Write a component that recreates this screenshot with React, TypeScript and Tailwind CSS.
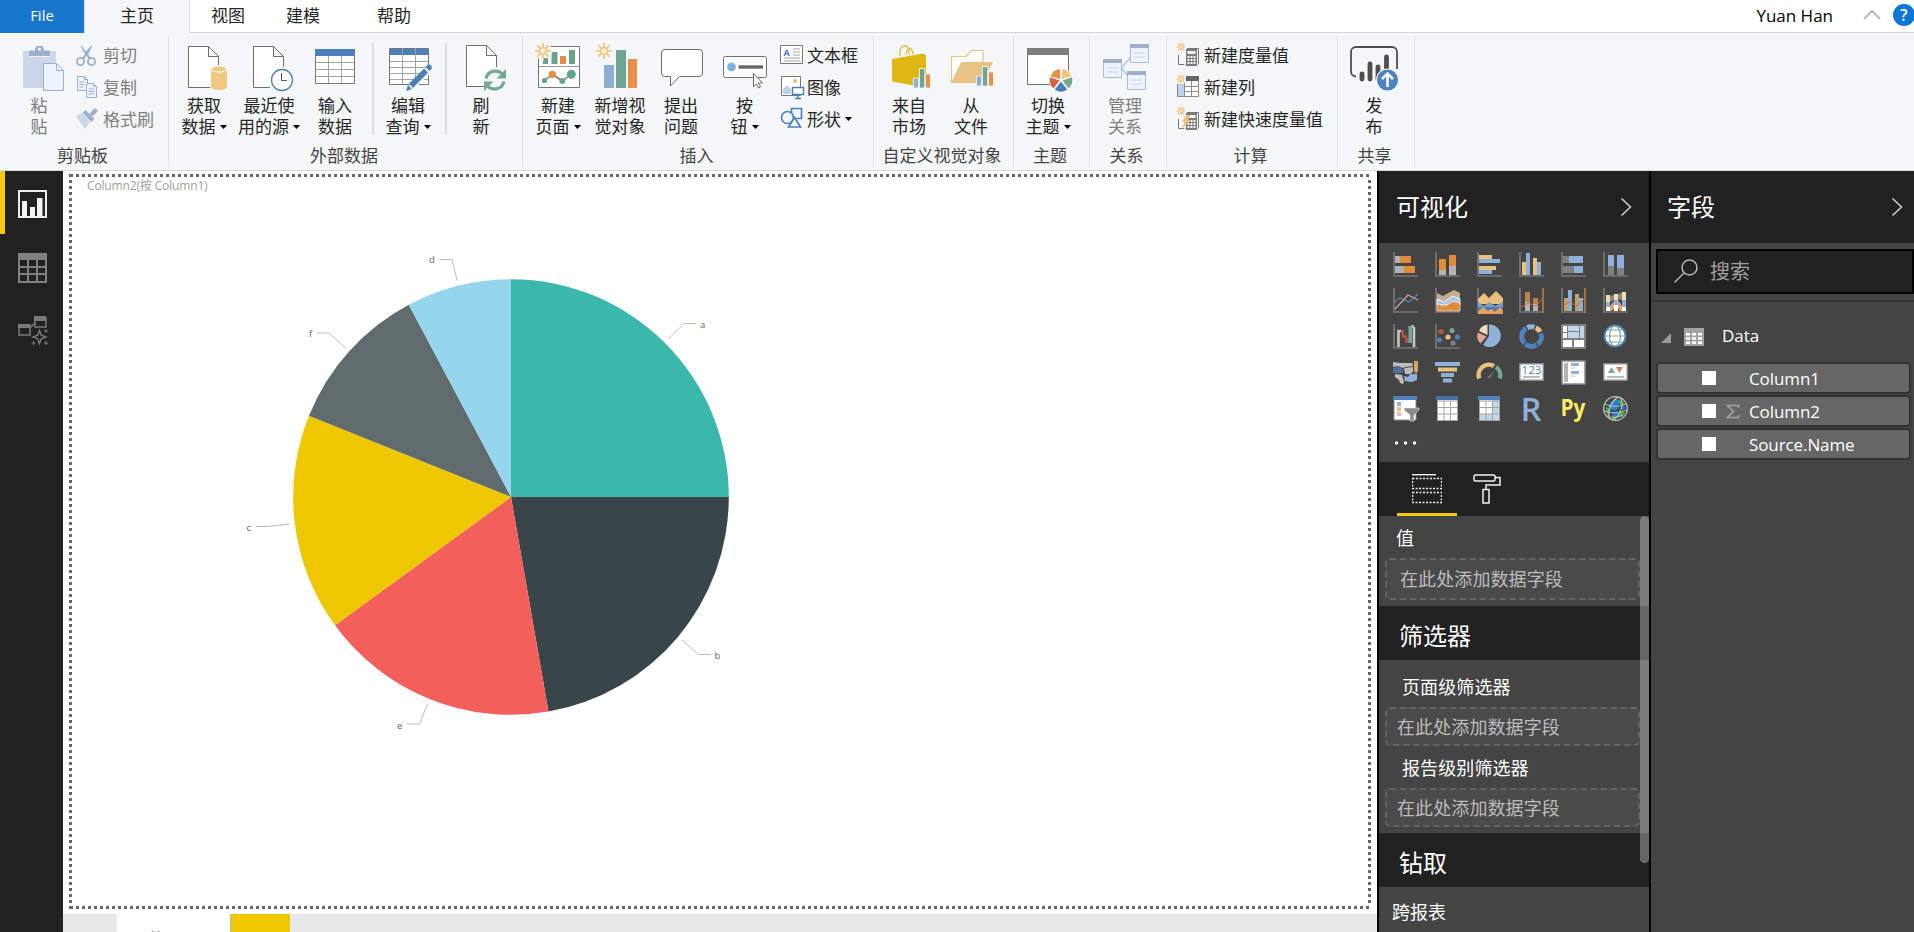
import type { ReactNode } from "react";

const FONT = "font-['Open_Sans','Noto_Sans_CJK_SC',sans-serif]";

/* ---------- shared drawing pieces ---------- */

function Art({ children }: { children: ReactNode }) {
  return (
    <svg className="block shrink-0 overflow-visible" width="48" height="50" viewBox="0 0 48 50" fill="none">
      {children}
    </svg>
  );
}

function SmallArt({ children }: { children: ReactNode }) {
  return (
    <svg className="block shrink-0 overflow-visible" width="24" height="24" viewBox="0 0 24 24" fill="none">
      {children}
    </svg>
  );
}

function Caret() {
  return (
    <svg className="ml-1 inline-block shrink-0" width="7" height="4" viewBox="0 0 7 4">
      <path d="M0 0h7L3.5 4z" fill="#000" />
    </svg>
  );
}

function Spark({ x, y, r, w = 1.6 }: { x: number; y: number; r: number; w?: number }) {
  const d = r * 0.72;
  const i = r * 0.42;
  const k = i * 0.8;
  return (
    <g stroke="#ecc27a" strokeWidth={w}>
      <path
        d={`M${x} ${y - r}V${y - i}M${x} ${y + i}V${y + r}M${x - r} ${y}H${x - i}M${x + i} ${y}H${x + r}M${x - d} ${y - d}L${x - k} ${y - k}M${x + k} ${y + k}L${x + d} ${y + d}M${x - d} ${y + d}L${x - k} ${y + k}M${x + k} ${y - k}L${x + d} ${y - d}`}
      />
      <circle cx={x} cy={y} r={i} strokeWidth={w * 0.8} fill="#f8ecd2" />
    </g>
  );
}

/* ---------- large ribbon icons ---------- */

const PasteIcon = () => (
  <Art>
    <path d="M8 8h33v37H8z" fill="#cdd7e9" />
    <path d="M14 7.500h6V5h1V3h7v2h1v2.500h6V13H14z" fill="#9fb0cd" />
    <circle cx="24.500" cy="6" r="1.500" fill="#f4f6f8" />
    <path d="M14 13.500h21" stroke="#f4f6f8" />
    <path d="M28.500 20.500h13l7 7v20h-20z" fill="#eef4fd" stroke="#9fb0cd" />
    <path d="M41.500 20.500v7h7" stroke="#9fb0cd" />
  </Art>
);

const GetDataIcon = () => (
  <Art>
    <path d="M8.500 3.500h20l10 10v31h-30z" fill="#fff" />
    <path d="M38.500 22v-8.500l-10-10h-20v41H30M28.500 3.500v10h10" stroke="#6e6e6e" />
    <path d="M31 26v18c0 4 16 4 16 0V26z" fill="#efc981" />
    <ellipse cx="39" cy="26" rx="8" ry="3" fill="#efc981" stroke="#fff" />
  </Art>
);

const RecentIcon = () => (
  <Art>
    <path d="M8.500 3.500h20l10 10v31h-30z" fill="#fff" />
    <path d="M38.500 24V13.500l-10-10h-20v41H25M28.500 3.500v10h10" stroke="#6e6e6e" />
    <circle cx="37" cy="37" r="10.500" fill="#fff" stroke="#4c82bd" strokeWidth="1.300" />
    <path d="M36.500 30v7.500H42" stroke="#555" />
  </Art>
);

const EnterDataIcon = () => (
  <Art>
    <path d="M4.500 7.500h39v33h-39z" fill="#fff" stroke="#777" />
    <path d="M4 6h40v7H4z" fill="#4c80ba" />
    <path d="M17.500 13v27M30.500 13v27M5 19.500h38M5 26.500h38M5 33.500h38" stroke="#a3a3a3" />
  </Art>
);

const EditQueryIcon = () => (
  <Art>
    <path d="M5.500 5.500h39v36h-39z" fill="#fff" stroke="#777" />
    <path d="M6 6h38v6H6z" fill="#4c80ba" />
    <path d="M18.500 5v36M31.500 5v36M6 18.500h38M6 24.500h38M6 30.500h38M6 36.500h38" stroke="#a3a3a3" />
    <path d="M25 42L44 23l5 5-19 18-8 3z" fill="#f4f6f8" />
    <path d="M22 48l2-6 4 4zM25 40.500L40 25.500l4 4-15 15.500zM41.500 24l2-2c2-1.500 5.500 1.500 4 4l-2 2z" fill="#4c80ba" />
  </Art>
);

const RefreshIcon = () => (
  <Art>
    <path d="M9.500 2.500h20l10 10v31h-30z" fill="#fff" />
    <path d="M39.500 24V12.500l-10-10h-20v41H27M29.500 2.500v10h10" stroke="#6e6e6e" />
    <circle cx="38" cy="37" r="11" fill="#f4f6f8" />
    <g stroke="#74a893" strokeWidth="3.200">
      <path d="M29 35.500c2-8.500 13-10 17.500-3M47 38.500c-2 8.500-13 10-17.500 3" />
    </g>
    <path d="M49 26v9.500h-9.500zM27 48v-9.500h9.500z" fill="#74a893" />
  </Art>
);

const NewPageIcon = () => (
  <Art>
    <path d="M4.500 3.500h41v41h-41z" fill="#fff" stroke="#777" />
    <path d="M5 23.500h40" stroke="#999" />
    <path d="M9 15h5v6H9zM17.500 9h6v12h-6zM35 7h6v14h-6z" fill="#68a38c" />
    <path d="M26 13h6v8h-6z" fill="#e78b45" />
    <circle cx="9" cy="8" r="9" fill="#f4f6f8" />
    <path d="M10 15h4v6h-4z" fill="#68a38c" />
    <Spark x={9} y={8} r={8} />
    <path d="M10.500 37.500l8-6 10 6.500 9-7" stroke="#777" strokeWidth="1.500" />
    <circle cx="10.500" cy="37.500" r="2.600" fill="#68a38c" />
    <circle cx="18.300" cy="31.300" r="3.600" fill="#e78b45" />
    <circle cx="28.300" cy="38" r="3" fill="#68a38c" />
    <circle cx="37.300" cy="31.300" r="4.500" fill="#68a38c" />
  </Art>
);

const NewVisualIcon = () => (
  <Art>
    <Spark x={8} y={8} r={8} />
    <path d="M8 22h10v23H8z" fill="#8dafd5" />
    <path d="M20 7h10v38H20z" fill="#6fa592" />
    <path d="M32 16h9v29h-9z" fill="#e78f4b" />
  </Art>
);

const AskIcon = () => (
  <Art>
    <path
      d="M8 6.500h34a3.500 3.500 0 013.500 3.500v20a3.500 3.500 0 01-3.500 3.500H22.500L13.500 43v-9.500H8A3.500 3.500 0 014.500 30V10A3.500 3.500 0 018 6.500z"
      fill="#fff"
      stroke="#6e6e6e"
    />
  </Art>
);

const ButtonIcon = () => (
  <Art>
    <rect x="2.500" y="13.500" width="43" height="21" rx="2" fill="#fff" stroke="#6e6e6e" />
    <circle cx="10.500" cy="24" r="4.400" fill="#7fb0d8" />
    <path d="M17.500 24H42" stroke="#666" strokeWidth="3.400" />
    <path d="M32.500 30.500v13l3-2.500 2 4 2-1-2-4h4z" fill="#fff" stroke="#666" />
  </Art>
);

const MiniBars = ({ x, y }: { x: number; y: number }) => (
  <g stroke="#f8f9fa" strokeWidth="0.800">
    <path d={`M${x} ${y - 10}h5v10h-5z`} fill="#8dafd5" />
    <path d={`M${x + 6} ${y - 19.5}h5.200V${y}h-5.200z`} fill="#6fa592" />
    <path d={`M${x + 12} ${y - 14}h5v14h-5z`} fill="#e78f4b" />
  </g>
);

const MarketIcon = () => (
  <Art>
    <path d="M15 13c-1-6 1-10 5-10.500 3 0 4 3 4 9M21 12c0-4 2-7 4-6.500 3 1 3 4 3 6" stroke="#dfc04b" strokeWidth="1.400" />
    <path d="M7 16l31-5.500 3 1.500v30.500H29l-22-4z" fill="#ddb714" />
    <MiniBars x={28.5} y={45} />
  </Art>
);

const FileVisualIcon = () => (
  <Art>
    <path d="M4.500 40V13.500h14l6-6h11.500V20" fill="#fff" stroke="#e9c383" strokeWidth="1.200" />
    <path d="M14 19h32L36 40H4z" fill="#e9c383" />
    <MiniBars x={29.5} y={43} />
  </Art>
);

const ThemeIcon = () => (
  <Art>
    <path d="M3.500 5.500h41v36h-41z" fill="#fff" stroke="#6e6e6e" />
    <path d="M3 5h42v7H3z" fill="#7d7d7d" />
    <circle cx="37" cy="37" r="12" fill="#fff" />
    <path d="M36.500 36L36 26a11 11 0 00-9.500 7.500z" fill="#e78f4b" />
    <path d="M38 36V26a11 11 0 019.500 7.500z" fill="#ecc880" />
    <path d="M38.500 37.500l9.500-3.200a11 11 0 01-3.500 11.200z" fill="#79a995" />
    <path d="M37 38.500l6.300 8a11 11 0 01-12.600 0z" fill="#4c80ba" />
    <path d="M35.500 37.500L26 34.300a11 11 0 003.500 11.200z" fill="#da6241" />
  </Art>
);

const RelBox = ({ x, y }: { x: number; y: number }) => (
  <g>
    <path d={`M${x + 0.5} ${y + 0.5}h18v18h-18z`} fill="#eef4fd" stroke="#aebdd6" />
    <path d={`M${x} ${y}h19v4H${x}z`} fill="#9fb0cd" />
    <path d={`M${x + 4} ${y + 9}h11M${x + 4} ${y + 13}h11`} stroke="#c5d2e6" />
  </g>
);

const RelationIcon = () => (
  <Art>
    <path d="M20 25l10-11M20 24l8 11" stroke="#b8c6dd" strokeWidth="1.600" />
    <RelBox x={29} y={1} />
    <RelBox x={2} y={16} />
    <RelBox x={26} y={28} />
  </Art>
);

const PublishIcon = () => (
  <Art>
    <path
      d="M6 33.500a5 5 0 01-5-5V9a5 5 0 015-5h36a5 5 0 015 5v17"
      stroke="#4f4f4f"
      strokeWidth="1.800"
      fill="none"
    />
    <g stroke="#4f4f4f" strokeWidth="4.800" strokeLinecap="round">
      <path d="M12 31v5M20 21v15M28 24v12M36.500 14v14" />
    </g>
    <circle cx="37.500" cy="37" r="11.500" fill="#f4f6f8" />
    <circle cx="37.500" cy="37" r="10.500" fill="#4c82bd" />
    <path d="M37.500 44V31M32 36l5.500-5.500L43 36" stroke="#fff" strokeWidth="2.600" />
  </Art>
);

/* ---------- small ribbon icons ---------- */

const CutIcon = () => (
  <SmallArt>
    <g stroke="#9fb0cd" strokeWidth="1.800">
      <circle cx="4.500" cy="18.500" r="3.600" />
      <circle cx="15.500" cy="18.500" r="3.600" />
    </g>
    <path d="M4.500 1.500c1 4 3 7 4.500 9.500L6 15.500l2 1 2.500-4 2.500 4 2-1-3-4.500c2-2.500 3.500-5.500 4-9.500l-6 7z" fill="#9fb0cd" />
  </SmallArt>
);

const CopyIcon = () => (
  <SmallArt>
    <g fill="#eef4fd" stroke="#9fb0cd">
      <path d="M1.500 1.500h7l3 3v11h-10z" />
      <path d="M10.500 8.500h7l3 3v11h-10z" />
    </g>
    <path
      d="M8.500 1.500v3h3M17.500 8.500v3h3M3.500 7h5M3.500 9.500h5M3.500 12h4M12.500 14h6M12.500 16.500h6M12.500 19h6"
      stroke="#9fb0cd"
    />
  </SmallArt>
);

const BrushIcon = () => (
  <SmallArt>
    <path d="M0 9l6-3 8 9-5 7z" fill="#cdd7e9" />
    <path d="M6.500 6l3-3 9 9-3 3z" fill="#9fb0cd" />
    <path d="M13.500 7l4-5c2-1.500 4.500.500 4 2.500l-5 5z" fill="#9fb0cd" />
  </SmallArt>
);

const TextBoxIcon = () => (
  <SmallArt>
    <path d="M.5 2.500h22v18H.5z" fill="#fff" stroke="#777" />
    <path d="M13 6h7M13 9h7M13 12h7M4 15h16M4 18h16" stroke="#a3a3a3" />
    <text x="3.500" y="12.500" fontSize="9" fontWeight="700" fill="#3f76b5" className={FONT}>
      A
    </text>
  </SmallArt>
);

const ImageIcon = () => (
  <SmallArt>
    <path d="M1.500 1.500h19v19h-19z" fill="#fff" stroke="#777" />
    <path d="M3 19V14l4-4 4 4v5z" fill="#c2d2e6" />
    <circle cx="15" cy="6" r="2" fill="#eab766" />
    <path d="M12.500 12.500h11v7h-11z" fill="#fff" stroke="#4c80ba" strokeWidth="1.400" />
    <path d="M18 20v3M15 23.500h6" stroke="#4c80ba" strokeWidth="1.400" />
  </SmallArt>
);

const ShapeIcon = () => (
  <SmallArt>
    <g stroke="#4c82bd" strokeWidth="1.700">
      <path d="M11.500 1.500h10v10h-10z" fill="#f4f6f8" />
      <circle cx="7.500" cy="10.500" r="6" fill="#f4f6f8" />
      <path d="M14.500 10.500l6 9.500h-12z" fill="#f4f6f8" />
    </g>
  </SmallArt>
);

const Calc = () => (
  <g>
    <path d="M9 6h11v17H9z" fill="#7c7c7c" />
    <path d="M10.500 8h8v3h-8z" fill="#f4f6f8" />
    <path d="M10.500 14h8M10.500 17h8M10.500 20h8" stroke="#f4f6f8" strokeWidth="1.800" strokeDasharray="2 1" />
  </g>
);

const MeasureIcon = () => (
  <SmallArt>
    <path d="M1.500 12v9.500h6M10 5.500h11.500v16" stroke="#777" fill="none" />
    <Calc />
    <Spark x={4} y={4} r={4.5} w={1.2} />
  </SmallArt>
);

const ColumnIcon = () => (
  <SmallArt>
    <path d="M.5 8.500h21v13H.5z" fill="#fff" />
    <path d="M0 9h7v13H0z" fill="#bcd2e9" />
    <path d="M9 1h13v5H9z" fill="#666" />
    <path d="M.5 9v12.500h21V5M7.500 8v13M14.500 6v15M8 11.500h13M8 16.500h13" stroke="#8a8a8a" />
    <Spark x={4} y={4} r={4.5} w={1.2} />
  </SmallArt>
);

const QuickMeasureIcon = () => (
  <SmallArt>
    <path d="M1.500 12v9.500h6M10 5.500h11.500v16" stroke="#777" fill="none" />
    <Calc />
    <path d="M9 8h5l-3 5h2.500L5 22l2.500-7H5z" fill="#ecc27a" />
    <Spark x={4} y={4} r={4.5} w={1.2} />
  </SmallArt>
);

/* ---------- ribbon layout ---------- */

type BigProps = { icon: ReactNode; lines: [string, string]; caret?: boolean; width: string; muted?: boolean };

function BigButton({ icon, lines, caret, width, muted }: BigProps) {
  return (
    <div className={`flex shrink-0 flex-col items-center ${width} ${muted ? "text-[#7f7f7f]" : "text-[#262626]"}`}>
      {icon}
      <div className="mt-[2px] h-[21px] whitespace-nowrap">{lines[0]}</div>
      <div className="flex h-[21px] items-center whitespace-nowrap">
        {lines[1]}
        {caret && <Caret />}
      </div>
    </div>
  );
}

function SmallButton({ icon, label, caret, muted }: { icon: ReactNode; label: string; caret?: boolean; muted?: boolean }) {
  return (
    <div className={`flex h-8 items-center ${muted ? "text-[#7f7f7f]" : "text-[#262626]"}`}>
      {icon}
      <span className="ml-[3px] whitespace-nowrap">{label}</span>
      {caret && <Caret />}
    </div>
  );
}

function Group({ label, width, pad, children }: { label: string; width: string; pad: string; children: ReactNode }) {
  return (
    <div className={`my-[3px] flex shrink-0 flex-col border-r border-[#dfe2e4] ${width}`}>
      <div className={`flex h-[109px] pt-[7px] ${pad}`}>{children}</div>
      <div className="h-[21px] pr-[3px] text-center whitespace-nowrap text-[#444]">{label}</div>
    </div>
  );
}

const Divider = ({ className }: { className: string }) => (
  <div className={`h-[91px] w-[2px] shrink-0 bg-[#dcdfe1] ${className}`} />
);

function Ribbon() {
  return (
    <div className="flex h-[138px] shrink-0 border-b border-[#d9dcdd] bg-[#f4f6f8] text-[17px] leading-[21px]">
      <Group label="剪贴板" width="w-[169px]" pad="pl-[9px]">
        <BigButton muted width="w-[60px]" icon={<PasteIcon />} lines={["粘", "贴"]} />
        <div className="-mt-[4px] ml-[7px] flex flex-col">
          <SmallButton muted icon={<CutIcon />} label="剪切" />
          <SmallButton muted icon={<CopyIcon />} label="复制" />
          <SmallButton muted icon={<BrushIcon />} label="格式刷" />
        </div>
      </Group>
      <Group label="外部数据" width="w-[354px]" pad="pl-[7px]">
        <BigButton caret width="w-[56px]" icon={<GetDataIcon />} lines={["获取", "数据"]} />
        <BigButton caret width="w-[74px]" icon={<RecentIcon />} lines={["最近使", "用的源"]} />
        <BigButton width="w-[58px]" icon={<EnterDataIcon />} lines={["输入", "数据"]} />
        <Divider className="ml-2" />
        <BigButton caret width="w-[68px]" icon={<EditQueryIcon />} lines={["编辑", "查询"]} />
        <Divider className="ml-[3px]" />
        <BigButton width="w-[68px]" icon={<RefreshIcon />} lines={["刷", "新"]} />
      </Group>
      <Group label="插入" width="w-[351px]" pad="pl-1">
        <BigButton caret width="w-[62px]" icon={<NewPageIcon />} lines={["新建", "页面"]} />
        <BigButton width="w-[62px]" icon={<NewVisualIcon />} lines={["新增视", "觉对象"]} />
        <BigButton width="w-[60px]" icon={<AskIcon />} lines={["提出", "问题"]} />
        <BigButton caret width="w-[67px]" icon={<ButtonIcon />} lines={["按", "钮"]} />
        <div className="-mt-[4px] ml-[2px] flex flex-col">
          <SmallButton icon={<TextBoxIcon />} label="文本框" />
          <SmallButton icon={<ImageIcon />} label="图像" />
          <SmallButton caret icon={<ShapeIcon />} label="形状" />
        </div>
      </Group>
      <Group label="自定义视觉对象" width="w-[140px]" pad="pl-1">
        <BigButton width="w-[62px]" icon={<MarketIcon />} lines={["来自", "市场"]} />
        <BigButton width="w-[62px]" icon={<FileVisualIcon />} lines={["从", "文件"]} />
      </Group>
      <Group label="主题" width="w-[76px]" pad="pl-px">
        <BigButton caret width="w-[66px]" icon={<ThemeIcon />} lines={["切换", "主题"]} />
      </Group>
      <Group label="关系" width="w-[77px]" pad="pl-[2px]">
        <BigButton muted width="w-[66px]" icon={<RelationIcon />} lines={["管理", "关系"]} />
      </Group>
      <Group label="计算" width="w-[171px]" pad="pl-[10px]">
        <div className="-mt-[4px] flex flex-col">
          <SmallButton icon={<MeasureIcon />} label="新建度量值" />
          <SmallButton icon={<ColumnIcon />} label="新建列" />
          <SmallButton icon={<QuickMeasureIcon />} label="新建快速度量值" />
        </div>
      </Group>
      <Group label="共享" width="w-[77px]" pad="pl-[3px]">
        <BigButton width="w-[66px]" icon={<PublishIcon />} lines={["发", "布"]} />
      </Group>
    </div>
  );
}

function TabBar() {
  return (
    <div className="flex h-[33px] shrink-0 bg-white text-[17px] leading-[31px] text-[#262626]">
      <div className="w-[84px] bg-[#1877cc] text-center text-[15px] text-white">File</div>
      <div className="w-[106px] border-x border-[#d9dcdd] bg-[#f4f6f8] text-center">主页</div>
      <div className="flex flex-1 border-b border-[#d5d8db]">
        <span className="ml-[21px]">视图</span>
        <span className="ml-[41px]">建模</span>
        <span className="ml-[57px]">帮助</span>
        <span className="ml-auto text-[17px] text-black">Yuan Han</span>
        <svg className="mt-2 ml-[30px]" width="18" height="14" viewBox="0 0 18 14" fill="none">
          <path d="M1 11l8-8 8 8" stroke="#a8a8a8" strokeWidth="1.600" />
        </svg>
        <div className="mt-1 ml-3 w-[21px] overflow-hidden">
          <div className="h-[22px] w-[22px] rounded-full bg-[#0a76d8] text-center text-[16px] leading-[22px] font-semibold text-white">
            ?
          </div>
        </div>
      </div>
    </div>
  );
}

/* ---------- left rail ---------- */

function Rail() {
  return (
    <div className="flex w-[63px] shrink-0 flex-col bg-[#212121]">
      <div className="flex h-[63px] items-center border-l-[5px] border-[#f2c811] pl-[13px]">
        <svg width="29" height="28" viewBox="0 0 29 28" className="mt-[3px]">
          <path d="M1 1h27v26H1z" fill="none" stroke="#ededed" strokeWidth="2" />
          <path d="M4 11h5v16H4zM12 17h5v10h-5zM19 8h5.500v19H19z" fill="#f3f3f3" />
        </svg>
      </div>
      <div className="flex h-[63px] items-center pl-[18px]">
        <svg width="29" height="30" viewBox="0 0 29 30" className="mt-[4px]">
          <path d="M0 0h29v30H0z" fill="#808080" />
          <path
            d="M2 7h7v6H2zM11 7h7v6h-7zM20 7h7v6h-7zM2 15h7v5H2zM11 15h7v5h-7zM20 15h7v5h-7zM2 22h7v6H2zM11 22h7v6h-7zM20 22h7v6h-7z"
            fill="#212121"
          />
        </svg>
      </div>
      <div className="flex h-[63px] items-center pl-[18px]">
        <svg width="30" height="30" viewBox="0 0 30 30" className="mt-[5px]" fill="none">
          <path d="M1 9h11v10H1zM17 2h11v9H17z" stroke="#7a7a7a" strokeWidth="1.500" />
          <path d="M0 8h12v4H0zM16 0h12v5H16z" fill="#7a7a7a" />
          <path d="M12 12l5-5" stroke="#7a7a7a" strokeWidth="1.500" />
          <path d="M21.500 14.500l1.800 4.700 4.700 1.800-4.700 1.800-1.800 4.700-1.800-4.700L15 21l4.700-1.800z" stroke="#7a7a7a" strokeWidth="1.500" />
          <path d="M28 13v4M26 15h4M28 25v4M26 27h4M15.500 25v4M13.500 27h4" stroke="#7a7a7a" />
        </svg>
      </div>
    </div>
  );
}

/* ---------- report canvas ---------- */

const CX = 281;
const CY = 266;
const R = 217.8;

const slices = [
  { from: 0, to: 90, color: "#3cb7ab" },
  { from: 90, to: 170.1, color: "#384549" },
  { from: 170.1, to: 233.9, color: "#f3605b" },
  { from: 233.9, to: 291.9, color: "#eec700" },
  { from: 291.9, to: 332, color: "#5f6b6d" },
  { from: 332, to: 360, color: "#95d5ee" },
];

function arc(from: number, to: number) {
  const pt = (deg: number) => {
    const a = (deg * Math.PI) / 180;
    return `${(CX + R * Math.sin(a)).toFixed(2)} ${(CY - R * Math.cos(a)).toFixed(2)}`;
  };
  return `M${CX} ${CY}L${pt(from)}A${R} ${R} 0 0 1 ${pt(to)}Z`;
}

const callouts = [
  { name: "a", x: 470, y: 97, line: "438.500,108 454,92.500 466,92.500" },
  { name: "b", x: 484.5, y: 428, line: "452,409 468.500,423.500 480.500,423.500" },
  { name: "e", x: 167, y: 497.5, line: "197.500,473 189.500,493 177,493" },
  { name: "c", x: 16.5, y: 300, line: "60,293 38,295.500 26,295.500" },
  { name: "f", x: 79, y: 106, line: "115.500,117 99,102 87,102" },
  { name: "d", x: 199, y: 32, line: "227,49.500 222,28.500 209.500,28.500" },
];

function PieChart() {
  return (
    <svg className="mt-[36px] ml-[158px] block" width="520" height="520" viewBox="0 0 520 520">
      {slices.map((s) => (
        <path key={s.color} d={arc(s.from, s.to)} fill={s.color} />
      ))}
      {callouts.map((c) => (
        <g key={c.name}>
          <polyline points={c.line} fill="none" stroke="#bdbdbd" />
          <text x={c.x} y={c.y} fontSize="9.500" fill="#666">
            {c.name}
          </text>
        </g>
      ))}
    </svg>
  );
}

const DOTS_H = "h-[3px] shrink-0 bg-[repeating-linear-gradient(90deg,#666_0_3px,transparent_3px_6px)]";
const DOTS_V = "w-[3px] shrink-0 bg-[repeating-linear-gradient(180deg,#666_0_3px,transparent_3px_6px)]";

function Canvas() {
  return (
    <div className="flex min-w-0 flex-1 flex-col bg-white">
      <div className="mt-[3px] mr-[6px] ml-[6px] flex h-[735px] shrink-0 flex-col">
        <div className="flex">
          <div className="h-[3px] w-1 bg-[#666]" />
          <div className={`ml-[3px] flex-1 ${DOTS_H}`} />
        </div>
        <div className="flex min-h-0 flex-1">
          <div className={`mt-[3px] ${DOTS_V}`} />
          <div className="flex flex-1 flex-col">
            <div className="ml-[15px] text-[12px] leading-[18px] tracking-[-0.15px] text-[#a0a0a0]">Column2(按 Column1)</div>
            <PieChart />
          </div>
          <div className={`mt-[3px] ${DOTS_V}`} />
        </div>
        <div className="flex">
          <div className="h-[3px] w-1 bg-[#666]" />
          <div className={`ml-[3px] flex-1 ${DOTS_H}`} />
        </div>
      </div>
      <div className="mt-[5px] flex h-[18px] shrink-0 overflow-hidden bg-[#e9e9e9]">
        <div className="ml-[54px] w-[113px] bg-white pt-4 text-center text-[16px] leading-[18px] text-[#333]">第 1 页</div>
        <div className="w-[60px] border-l border-[#bbb] bg-[#eec700]" />
      </div>
    </div>
  );
}

/* ---------- visualization gallery ---------- */

const G = "#777";
const OR = "#e08b3a";
const LG = "#b3b3b3";
const BL = "#8fb0d8";
const YL = "#e8c27d";
const DB = "#4f82bd";
const GN = "#74a893";

const Axis = () => <path d="M1 0v24h24" stroke={G} strokeWidth="1.700" fill="none" />;

const Ring = ({ at, len, color }: { at: number; len: number; color: string }) => (
  <circle
    cx="12.500"
    cy="12.500"
    r="9.800"
    fill="none"
    stroke={color}
    strokeWidth="5"
    pathLength="360"
    strokeDasharray={`${len} ${360 - len}`}
    transform={`rotate(${at - 90} 12.5 12.5)`}
  />
);

const visuals: ReactNode[] = [
  <>
    <Axis />
    <path d="M2 4h5v7H2zM2 14h9v7H2z" fill={LG} />
    <path d="M7 4h11v7H7zM11 14h11v7H11z" fill={OR} />
  </>,
  <>
    <Axis />
    <path d="M4 18h7v5H4zM14 14h7v9h-7z" fill={LG} />
    <path d="M4 7h7v11H4zM14 3h7v11h-7z" fill={OR} />
  </>,
  <>
    <Axis />
    <path d="M2 3h13v4H2zM2 14h17v4H2z" fill={YL} />
    <path d="M2 7h21v4H2zM2 18h13v4H2z" fill={BL} />
  </>,
  <>
    <Axis />
    <path d="M3 10h4v13H3zM14 6h4v17h-4z" fill={YL} />
    <path d="M7 1h4v22H7zM18 10h4v13h-4z" fill={BL} />
  </>,
  <>
    <Axis />
    <path d="M2 4h6v7H2zM2 14h11v7H2z" fill="#808080" />
    <path d="M8 4h14v7H8zM13 14h9v7h-9z" fill={BL} />
  </>,
  <>
    <Axis />
    <path d="M5 14h6v9H5zM14 16h7v7h-7z" fill="#808080" />
    <path d="M5 3h6v11H5zM14 3h7v13h-7z" fill={BL} />
  </>,
  <>
    <Axis />
    <path d="M2 14l5-4 9 4 9-8" stroke={DB} strokeWidth="1.200" fill="none" />
    <path d="M2 21L15 7l10 5" stroke="#d3a596" strokeWidth="1.200" fill="none" />
  </>,
  <>
    <Axis />
    <path d="M2 5l6 3 11-6 6 3v8H2z" fill="#bfae90" />
    <path d="M2 11l7 3 9-6 7 3v6H2z" fill="#a9c6e2" stroke="#fff" strokeWidth="0.900" />
    <path d="M2 15.500l7 3 9-5 7 1.500v8H2z" fill={OR} stroke="#fff" strokeWidth="0.600" />
  </>,
  <>
    <Axis />
    <path d="M1 11l6-6 5 5 7-7 7 7v6H1z" fill="#e8c27d" />
    <path d="M1 14l6 4 5-4 6 4 8-4v11H1z" fill="#7a9cc4" />
    <path d="M1 19h25v6H1z" fill="#4f7cab" />
    <path d="M1 24l5-5 5 4 3-2 4 3 5-5 3 4v3H1z" fill="#eba05f" />
  </>,
  <>
    <Axis />
    <path d="M6 14h5v9H6zM14 16h5v7h-5z" fill={LG} />
    <path d="M6 4h5v10H6zM14 10h5v6h-5z" fill="#b9824f" />
    <path d="M24 0v25" stroke="#b3763c" strokeWidth="1.800" />
    <path d="M2 19l7-4 8 3 6-7" stroke="#d8694a" fill="none" />
  </>,
  <>
    <Axis />
    <path d="M3 10h4v13H3zM14 6h4v17h-4z" fill="#c2a263" />
    <path d="M7 2h4v21H7zM18 10h4v13h-4z" fill={BL} />
    <path d="M24 0v25" stroke="#b3763c" strokeWidth="1.800" />
    <path d="M2 18l6-4 8 4 7-7" stroke="#d8694a" fill="none" />
  </>,
  <>
    <Axis />
    <path d="M7 8l4-1v5l-4 2zM15 6l4-1v7l-4-1z" fill="#8a8a80" />
    <path d="M7 18l4-5v8l-3 2H7zM15 12l4 6v5h-2l-2-3z" fill="#dba179" />
    <path d="M3 7h4v16H3zM11 6h4v17h-4zM19 4h4v19h-4z" fill="#fff" />
    <path d="M3 7h4v7H3zM11 6h4v7h-4zM19 4h4v8h-4z" fill="#efdcb1" />
    <path d="M3 14h4v5H3zM11 12h4v5h-4zM19 12h4v7h-4z" fill={BL} />
  </>,
  <>
    <Axis />
    <path d="M5.500 23V7H8M21 2.500h-3M21 3v20" stroke="#c5c5c5" strokeWidth="2.600" fill="none" />
    <path d="M8 6h3v5h3v7h-2v-4H9z" fill="#b3503a" />
    <path d="M12 14h4v5h-4z" fill="#b3503a" />
    <path d="M15.500 2h3.500v17h-3.500z" fill={GN} />
  </>,
  <>
    <Axis />
    <circle cx="6" cy="7.500" r="2.600" fill="#b9573f" />
    <circle cx="17" cy="6.500" r="2.600" fill={GN} />
    <circle cx="13" cy="13" r="2.600" fill={YL} />
    <circle cx="22.500" cy="13" r="2.600" fill={DB} />
    <circle cx="4.500" cy="16" r="2.600" fill={DB} />
    <circle cx="18" cy="19" r="2.600" fill="#808080" />
  </>,
  <>
    <path d="M12 12V0.500a11.300 11.300 0 11-6 20.500z" fill={BL} />
    <path d="M10.500 11V0.500A11 11 0 002 7z" fill="#ecdcb5" />
    <path d="M9.500 12.500L.8 8.500a11 11 0 002.700 11z" fill="#e3a79a" />
  </>,
  <>
    <Ring at={-26} len={44} color={BL} />
    <Ring at={26} len={36} color={YL} />
    <Ring at={72} len={70} color={DB} />
    <Ring at={149} len={70} color={DB} />
    <Ring at={226} len={100} color={DB} />
  </>,
  <>
    <path d="M0 0h25v25H0z" fill="#808080" />
    <path d="M2 2h4v6H2zM2 9h4v5H2zM2 16h9v7H2zM13 16h10v7H13z" fill="#fff" />
    <path d="M7 2h11v5H7zM7 8h11v6H7zM19 2h4v12h-4z" fill="#c5d6eb" />
  </>,
  <>
    <circle cx="12" cy="12" r="10.500" fill="#fff" stroke={DB} strokeWidth="1.800" />
    <g stroke="#79a995" fill="none" strokeWidth="1.200">
      <ellipse cx="12" cy="12" rx="5.500" ry="10" />
      <path d="M2 12h20M4 6h16M4 18h16" />
    </g>
  </>,
  <>
    <path d="M0 2l7 1h12V2l1 4-8 1-2 1-5-2-5 1zM11 8l9-1v5l-3 2h-5zM2 14l7 1 2 7-1 2-3-1-1-3-4-3z" fill="#bdbdbd" />
    <path d="M0 9l3-3 5 1 2 3v3H0z" fill="#4d6f9c" />
    <path d="M21 1h4v10l-2 3-2-3z" fill="#cfa65e" />
    <path d="M11 16l4 1 2-3h7v6l-5 2-7-1z" fill={BL} />
  </>,
  <>
    <path d="M0 2h25v4H0zM6 13h13v4H6zM8 18.500h9v4H8z" fill={BL} />
    <path d="M3 7.500h19v4H3z" fill={YL} />
  </>,
  <>
    <path d="M2.200 18.500A10.300 10.300 0 0117 6" stroke={YL} strokeWidth="4.400" fill="none" />
    <path d="M19 7a10.300 10.300 0 013.800 11.500" stroke={GN} strokeWidth="4.400" fill="none" />
    <path d="M10.500 17.500L18 10.500l-5 7.500-2 .5z" fill="#777" />
  </>,
  <>
    <path d="M.75 3.750h23.500v16.500H.75z" fill="#fff" stroke="#8a8a8a" strokeWidth="1.500" />
    <text x="2.500" y="13.500" fontSize="11" fill={DB} textLength="20" lengthAdjust="spacingAndGlyphs">
      123
    </text>
    <path d="M4 17h17" stroke="#777" />
  </>,
  <>
    <path d="M1 1h23v23H1z" fill="#fff" stroke="#8a8a8a" strokeWidth="1.500" />
    <path d="M3 3h4v19H3z" fill="#b3b3b3" />
    <path d="M10 3h8v3h-8zM10 11h8v3h-8z" fill={BL} />
    <path d="M10 8h4M10 16h4" stroke="#bbb" />
  </>,
  <>
    <path d="M.75 3.750h23.500v16.500H.75z" fill="#fff" stroke="#8a8a8a" strokeWidth="1.500" />
    <path d="M5 13l3.500-6 3.500 6z" fill={GN} />
    <path d="M13 7h7l-3.500 6z" fill="#e07a5c" />
    <path d="M4 17h17" stroke="#777" />
  </>,
  <>
    <path d="M1 1h22v23H1z" fill="#fff" stroke="#8a8a8a" />
    <path d="M0 0h24v4H0z" fill={DB} />
    <path d="M4 6h4v4H4z" fill={BL} />
    <path d="M4 11h4v4H4z" fill={YL} />
    <path d="M4 16h4v4H4z" fill="#ecbcb0" />
    <path d="M11 12h15v2l-5 5v6h-4v-6l-6-5z" fill="#8a8a8a" stroke="#fff" strokeWidth="0.500" />
  </>,
  <>
    <path d="M2 1h21v23.500H2z" fill="#fff" />
    <path d="M2 5h21M2.500 4v20.500h20V4M9 5v19M15.500 5v19M2 11.500h21M2 18h21" stroke="#a3a3a3" fill="none" />
    <path d="M1 0h22v4H1z" fill="#4a6fa5" />
  </>,
  <>
    <path d="M2 1h21v23.500H2z" fill="#fff" />
    <path d="M15.500 4H23v20.500H2V18h13.500z" fill="#c5d6eb" />
    <path d="M2 5h21M2.500 4v20.500h20V4M9 5v19M15.500 5v19M2 11.500h21M2 18h21" stroke="#a3a3a3" fill="none" />
    <path d="M1 0h22v4H1z" fill={DB} />
  </>,
  <text x="1.500" y="24.500" fontSize="32" fontWeight="600" fill={BL} textLength="21" lengthAdjust="spacingAndGlyphs">
    R
  </text>,
  <text x="-0.500" y="20" fontSize="23" fontWeight="700" fill="#fdec63" textLength="25" lengthAdjust="spacingAndGlyphs">
    Py
  </text>,
  <>
    <circle cx="12.500" cy="12.500" r="11.800" fill="#3d4a40" />
    <path d="M8 6l7-3 3 3-3 3 1 3-5 3-4-2-2-3zM9 17l5-2 5 2-3 5-6-1zM18 8l4 3-1 4-3-2z" fill="#2b7bd0" />
    <path d="M3 11l3 1 1 4-2 2-2-3zM16 3l5 4-2 3-3-3zM17 15l5 2-3 4-3-1zM9 20l4 1v3l-4-1z" fill="#4aae3f" />
    <g stroke="#c0c0c0" fill="none">
      <circle cx="12.500" cy="12.500" r="11.800" strokeWidth="1.300" />
      <ellipse cx="12.500" cy="12.500" rx="5.500" ry="11.800" transform="rotate(20 12.500 12.500)" />
      <path d="M2 8c7 3 14 3 21 0M1 15c8 3 16 2 23-1M5 21c5 1 11 0 15-2M15 1c-6 5-10 12-10 20" />
    </g>
  </>,
];

const Chevron = () => (
  <svg width="12" height="20" viewBox="0 0 12 20" fill="none">
    <path d="M1.500 1.500L10.500 10l-9 8.500" stroke="#d0d0d0" strokeWidth="1.500" />
  </svg>
);

function DropField({ size, pad }: { size: string; pad: string }) {
  return (
    <div
      className={`ml-[6px] flex w-[255px] items-center rounded-[5px] border-2 border-dashed border-[#636363] bg-[#4a4a4a] text-[18px] tracking-[0.1px] text-[#bcbcbc] ${size} ${pad}`}
    >
      在此处添加数据字段
    </div>
  );
}

const Section = ({ children }: { children: ReactNode }) => (
  <div className="flex h-[54px] items-center bg-[#212121] pl-5 text-[24px] leading-none text-white">
    <span className="mt-[6px]">{children}</span>
  </div>
);

function Visualizations() {
  return (
    <div className="flex w-[274px] shrink-0 flex-col border-x-2 border-black bg-[#444] leading-none text-white">
      <div className="flex h-[72px] shrink-0 items-center justify-between bg-[#212121] pr-[17px] pl-[17px] text-[24px]">
        <span>可视化</span>
        <Chevron />
      </div>
      <div className="grid h-[190px] shrink-0 auto-rows-[36px] grid-cols-[repeat(6,42px)] pt-[9px] pl-[14px]">
        {visuals.map((v, i) => (
          <svg key={i} width="25" height="25" viewBox="0 0 25 25" className="overflow-visible">
            {v}
          </svg>
        ))}
      </div>
      <div className="h-[29px] shrink-0 pt-2 pl-[15px]">
        <svg width="24" height="4" viewBox="0 0 24 4" fill="#fff">
          <circle cx="2.500" cy="2" r="1.700" />
          <circle cx="11.500" cy="2" r="1.700" />
          <circle cx="20.500" cy="2" r="1.700" />
        </svg>
      </div>
      <div className="flex h-[54px] shrink-0 bg-[#212121] pl-[18px]">
        <div className="flex w-[60px] justify-center border-b-[3px] border-[#f2c811] pt-3">
          <svg width="30" height="30" viewBox="0 0 30 30" fill="none" stroke="#f0f0f0">
            <path d="M0 .7h24" strokeWidth="1.400" />
            <path d="M.5 4.500h29v10H.5zM.5 18.500h29v10H.5z" strokeWidth="1.400" strokeDasharray="2 1.500" />
          </svg>
        </div>
        <svg className="mt-3 ml-4" width="30" height="30" viewBox="0 0 30 30" fill="none" stroke="#f0f0f0" strokeWidth="1.500">
          <rect x="1" y="1" width="21" height="6" rx="1.500" />
          <path d="M22 3.500h5v7.500H13v4M10 15.500h6v13.500h-6z" />
        </svg>
      </div>
      <div className="flex">
        <div className="flex w-[261px] shrink-0 flex-col text-[18px]">
          <div className="flex h-[42px] items-center pt-[2px] pl-[17px]">值</div>
          <DropField size="h-[42px]" pad="pl-[13px]" />
          <div className="h-[6px]" />
          <Section>筛选器</Section>
          <div className="flex h-[47px] items-center pt-[7px] pl-[23px] tracking-[0.1px]">页面级筛选器</div>
          <DropField size="h-[39px]" pad="pl-[10px]" />
          <div className="flex h-[42px] items-center pt-[2px] pl-[23px] tracking-[0.1px]">报告级别筛选器</div>
          <DropField size="h-[39px]" pad="pl-[10px]" />
          <div className="h-[6px]" />
          <Section>钻取</Section>
          <div className="flex h-[45px] items-center pt-[5px] pl-[13px]">跨报表</div>
        </div>
        <div className="flex w-[9px] flex-col">
          <div className="bg-[linear-gradient(#444_317px,#212121_317px)]">
            <div className="flex h-[347px] w-[9px] flex-col overflow-hidden rounded-[5px] bg-[#7b7b7b]">
              <div className="mt-[90px] h-[54px] bg-[#666]" />
              <div className="mt-[173px] h-[30px] bg-[#666]" />
            </div>
          </div>
          <div className="h-6 bg-[#212121]" />
        </div>
      </div>
    </div>
  );
}

/* ---------- fields pane ---------- */

function FieldRow({ name, sum }: { name: string; sum?: boolean }) {
  return (
    <div className="mb-px ml-[5px] flex h-8 w-[255px] items-center rounded-[4px] border-2 border-[#333] bg-[#666] text-[17px] tracking-[-0.1px]">
      <div className="ml-11 h-[14px] w-[14px] bg-white" />
      <div className="ml-[10px] w-[23px]">
        {sum && (
          <svg width="14" height="15" viewBox="0 0 14 15" fill="none">
            <path d="M12.500 4V1.500h-11l6 6-6 6h11V11" stroke="#a3a3a3" strokeWidth="1.700" />
          </svg>
        )}
      </div>
      <span>{name}</span>
    </div>
  );
}

function Fields() {
  return (
    <div className="flex w-[263px] shrink-0 flex-col bg-[#444] leading-none text-white">
      <div className="flex h-[72px] items-center justify-between bg-[#212121] pr-[11px] pl-4 text-[24px]">
        <span>字段</span>
        <Chevron />
      </div>
      <div className="mt-[6px] ml-[5px] flex h-[45px] items-center border-2 border-black bg-[#212121] pl-4 text-[20px] text-[#a0a0a0]">
        <svg width="25" height="25" viewBox="0 0 25 25" fill="none" stroke="#b5b5b5" strokeWidth="1.500">
          <circle cx="15.500" cy="8.500" r="7.500" />
          <path d="M10 14L.5 23.500" />
        </svg>
        <span className="mt-px ml-[11px]">搜索</span>
      </div>
      <div className="mt-[6px] h-[2px] bg-[#333]" />
      <div className="mt-[13px] mb-[7px] flex h-[40px] items-center pl-[10px] text-[17px]">
        <svg width="10" height="10" viewBox="0 0 10 10" className="mt-[6px]">
          <path d="M10 0v10H0z" fill="#999" />
        </svg>
        <svg width="20" height="18" viewBox="0 0 20 18" className="mt-[3px] ml-[13px]">
          <path d="M0 0h20v18H0z" fill="#a3a3a3" />
          <path
            d="M2 5h4v2.500H2zM8 5h4v2.500H8zM14 5h4v2.500h-4zM2 9.300h4v2.500H2zM8 9.300h4v2.500H8zM14 9.300h4v2.500h-4zM2 13.500h4V16H2zM8 13.500h4V16H8zM14 13.500h4V16h-4z"
            fill="#fff"
          />
        </svg>
        <span className="ml-[18px]">Data</span>
      </div>
      <FieldRow name="Column1" />
      <FieldRow name="Column2" sum />
      <FieldRow name="Source.Name" />
    </div>
  );
}

export default function App() {
  return (
    <div className={`flex h-[932px] w-[1914px] flex-col overflow-hidden ${FONT}`}>
      <TabBar />
      <Ribbon />
      <div className="flex h-[761px] shrink-0">
        <Rail />
        <Canvas />
        <Visualizations />
        <Fields />
      </div>
    </div>
  );
}
